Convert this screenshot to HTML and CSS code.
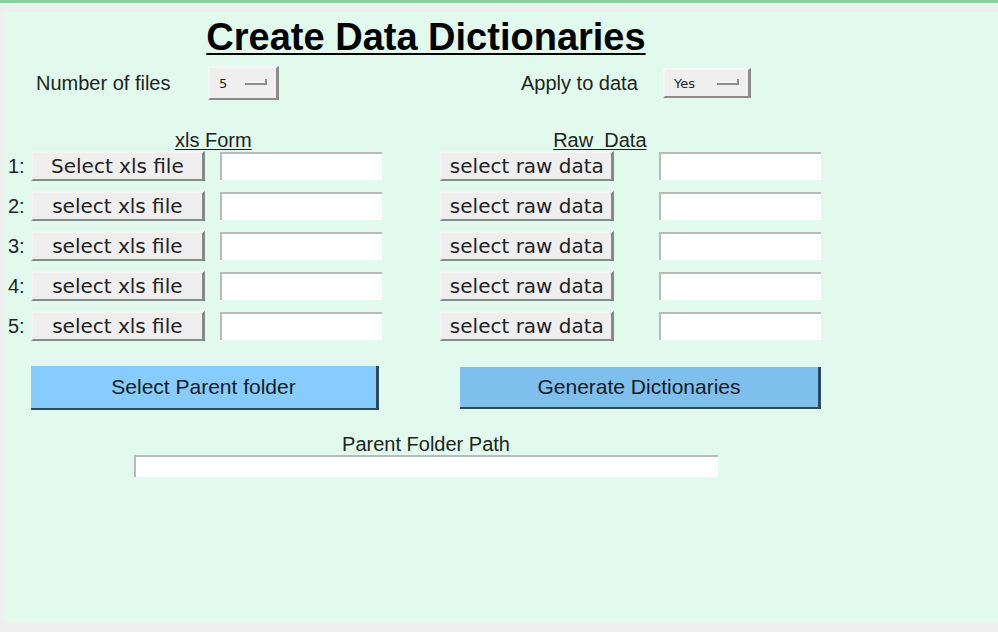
FILE: index.html
```html
<!DOCTYPE html>
<html lang="en">
<head>
<meta charset="utf-8">
<meta name="viewport" content="width=device-width, initial-scale=1">
<title>Create Data Dictionaries</title>
<link rel="stylesheet" href="styles.css">
</head>
<body>
<main class="panel">
  <form class="form">
    <h1 class="title">Create Data Dictionaries</h1>

    <div class="options">
      <div class="option option-files">
        <label for="count">Number of files</label>
        <span class="menu menu-count">
          <select id="count"><option>1</option><option>2</option><option>3</option><option>4</option><option selected>5</option></select>
          <svg class="mark" viewBox="0 0 24 8" aria-hidden="true"><path class="mark-light" d="M1 4H20"/><path class="mark-dark" d="M1 6H22V1"/></svg>
        </span>
      </div>
      <div class="option option-apply">
        <label for="apply">Apply to data</label>
        <span class="menu menu-apply">
          <select id="apply"><option selected>Yes</option><option>No</option></select>
          <svg class="mark" viewBox="0 0 24 8" aria-hidden="true"><path class="mark-light" d="M1 4H20"/><path class="mark-dark" d="M1 6H22V1"/></svg>
        </span>
      </div>
    </div>

    <div class="columns headings">
      <h2 class="heading heading-form">xls Form</h2>
      <h2 class="heading heading-raw">Raw&nbsp; Data</h2>
    </div>

    <div class="rows">
      <div class="columns">
        <label class="number" for="xls1">1:</label>
        <button class="button xls-button" type="button">Select xls file</button>
        <input class="entry xls-entry" id="xls1" type="text">
        <button class="button raw-button" type="button">select raw data</button>
        <input class="entry raw-entry" type="text" aria-label="Raw data 1">
      </div>
      <div class="columns">
        <label class="number" for="xls2">2:</label>
        <button class="button xls-button" type="button">select xls file</button>
        <input class="entry xls-entry" id="xls2" type="text">
        <button class="button raw-button" type="button">select raw data</button>
        <input class="entry raw-entry" type="text" aria-label="Raw data 2">
      </div>
      <div class="columns">
        <label class="number" for="xls3">3:</label>
        <button class="button xls-button" type="button">select xls file</button>
        <input class="entry xls-entry" id="xls3" type="text">
        <button class="button raw-button" type="button">select raw data</button>
        <input class="entry raw-entry" type="text" aria-label="Raw data 3">
      </div>
      <div class="columns">
        <label class="number" for="xls4">4:</label>
        <button class="button xls-button" type="button">select xls file</button>
        <input class="entry xls-entry" id="xls4" type="text">
        <button class="button raw-button" type="button">select raw data</button>
        <input class="entry raw-entry" type="text" aria-label="Raw data 4">
      </div>
      <div class="columns">
        <label class="number" for="xls5">5:</label>
        <button class="button xls-button" type="button">select xls file</button>
        <input class="entry xls-entry" id="xls5" type="text">
        <button class="button raw-button" type="button">select raw data</button>
        <input class="entry raw-entry" type="text" aria-label="Raw data 5">
      </div>
    </div>

    <div class="actions">
      <button class="action action-folder" type="button">Select Parent folder</button>
      <button class="action action-generate" type="button">Generate Dictionaries</button>
    </div>

    <div class="path">
      <label for="path">Parent Folder Path</label>
      <input class="entry path-entry" id="path" type="text">
    </div>
  </form>
</main>
</body>
</html>
```
FILE: styles.css
```css
* {
  box-sizing: border-box;
}

body {
  display: flex;
  flex-direction: column;
  min-height: 100vh;
  margin: 0;
  padding: 9px 0 10px 3px;
  border-top: 3px solid #8bd19f;
  background: #efefef;
  color: #1c2420;
  font-family: "Liberation Sans", Arial, sans-serif;
  font-size: 20px;
  line-height: 22px;
}

.panel {
  flex: 1;
  padding-right: 177px;
  background: #e1faed;
}

.form {
  min-width: 640px;
  padding-top: 5px;
}

.title {
  margin: 0 0 7px 28px;
  color: #000;
  font-size: 38px;
  line-height: 40px;
  text-align: center;
  text-decoration: underline;
  text-decoration-thickness: 2px;
  text-underline-offset: 3px;
}

.options {
  display: grid;
  grid-template-columns: 486fr 332fr;
  align-items: center;
  padding-top: 2px;
}

.option {
  display: grid;
  align-items: center;
}

.option-files {
  grid-template-columns: 172px auto;
  padding-left: 33px;
}

.option-apply {
  grid-template-columns: 142px auto;
  padding-left: 32px;
}

.menu {
  position: relative;
  display: flex;
}

.menu select {
  appearance: none;
  width: 100%;
  margin: 0;
  padding: 0 0 0 9px;
  border: 2px solid;
  border-color: #f6f6f6 #8c8c8c #8c8c8c #f6f6f6;
  border-right-width: 3px;
  border-radius: 0;
  background: #efefef;
  color: #222;
  font-family: "DejaVu Sans", sans-serif;
  font-size: 13px;
}

.menu-count {
  width: 71px;
  height: 34px;
}

.menu-apply {
  width: 88px;
  height: 30px;
}

.mark {
  position: absolute;
  right: 11px;
  top: 50%;
  width: 24px;
  height: 8px;
  margin-top: -5px;
  fill: none;
  pointer-events: none;
}

.mark-light {
  stroke: #fafafa;
}

.mark-dark {
  stroke: #8c8c8c;
  stroke-width: 2;
}

.columns {
  display: grid;
  grid-template-columns: 28px 174fr 15fr 162fr 59fr 174fr 45fr 162fr;
  align-items: center;
}

.headings {
  padding-top: 30px;
}

.heading {
  margin: 0;
  font-size: 20px;
  font-weight: normal;
  line-height: 21px;
  text-align: center;
  text-decoration: underline;
  text-decoration-thickness: 1px;
  text-underline-offset: 2px;
}

.heading-form {
  grid-column: 2 / 5;
  padding-left: 14px;
}

.heading-raw {
  grid-column: 6 / 8;
  padding-left: 100px;
}

.rows {
  display: grid;
  gap: 10px;
}

.number {
  grid-column: 1;
  padding-left: 5px;
}

.xls-button {
  grid-column: 2;
}

.xls-entry {
  grid-column: 4;
}

.raw-button {
  grid-column: 6;
}

.raw-entry {
  grid-column: 8;
}

.button {
  height: 30px;
  padding: 0;
  border: 2px solid;
  border-color: #f4f4f4 #858b88 #858b88 #f4f4f4;
  border-right-width: 3px;
  background: #efefef;
  color: #222;
  font-family: "DejaVu Sans", sans-serif;
  font-size: 20px;
  line-height: 22px;
  white-space: nowrap;
}

.entry {
  width: 100%;
  min-width: 0;
  height: 28px;
  padding: 0 4px;
  border: 0 solid #b5bdb9;
  border-width: 2px 0 0 2px;
  border-radius: 0;
  background: #fff;
  font: inherit;
}

.actions {
  display: grid;
  grid-template-columns: 348fr 81fr 361fr;
  align-items: center;
  padding: 25px 0 0 28px;
}

.action {
  padding: 0;
  border: 0 solid #2d4a5c;
  border-width: 0 3px 2px 0;
  color: #101c28;
  font-family: inherit;
  font-size: 21px;
}

.action-folder {
  height: 44px;
  background: #87ccff;
}

.action-generate {
  grid-column: 3;
  height: 42px;
  background: #7ebfee;
}

.path {
  display: flex;
  flex-direction: column;
  align-items: center;
  padding: 23px 0 0 28px;
}

.path-entry {
  width: 74%;
  height: 22px;
}
```
